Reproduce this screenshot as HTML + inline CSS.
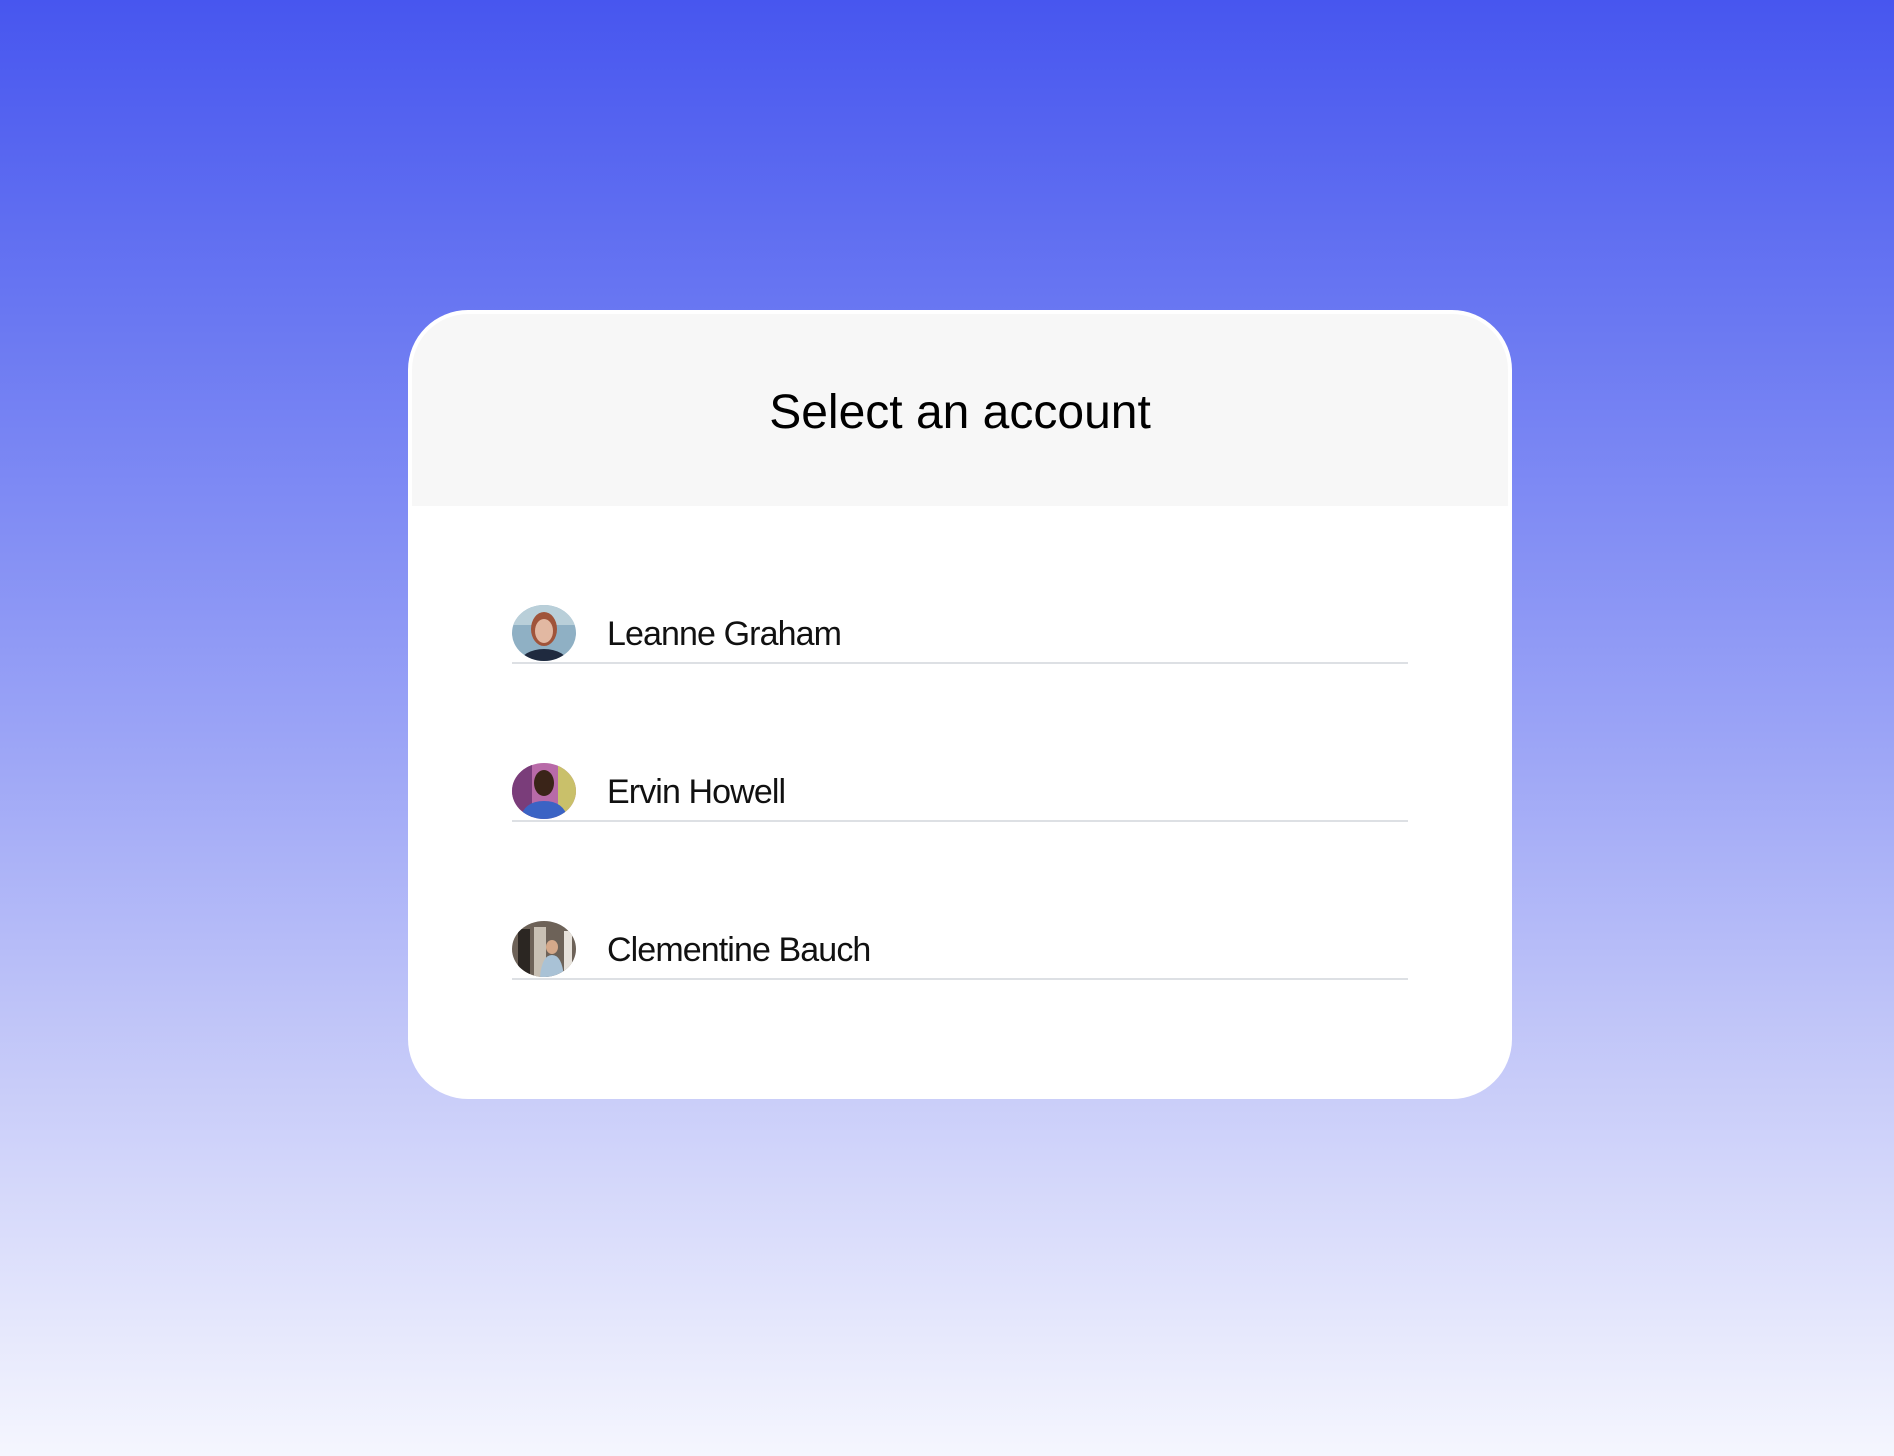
<!DOCTYPE html>
<html><head><meta charset="utf-8"><style>
html,body{margin:0;padding:0;}
body{width:1894px;height:1456px;overflow:hidden;position:relative;
background:linear-gradient(180deg,#4756ef 0%,#6a78f2 22%,#9aa3f6 50%,#c9cdf9 75%,#f5f6fe 100%);
font-family:"Liberation Sans",sans-serif;}
.card{position:absolute;left:408px;top:310px;width:1104px;height:789px;background:#fff;border-radius:60px;overflow:hidden;}
.head{position:absolute;left:4px;top:4px;right:4px;height:192px;background:#f7f7f7;border-radius:56px 56px 0 0;}
.title{position:absolute;left:0;right:0;top:71px;text-align:center;font-size:48px;color:#000;}
.row{position:absolute;left:104px;width:896px;height:57px;border-bottom:2px solid #dde0e4;}
.av{position:absolute;left:0;top:0;width:64px;height:56px;border-radius:50%;overflow:hidden;}
.nm{position:absolute;left:95px;top:10px;font-size:34px;color:#111;letter-spacing:-0.9px;}
</style></head><body>
<div class="card">
 <div class="head"><div class="title">Select an account</div></div>
 <div class="row" style="top:295px">
  <div class="av"><svg width="64" height="56"><rect width="64" height="56" fill="#8fb0c4"/><rect y="0" width="64" height="20" fill="#b9cfd9"/><ellipse cx="32" cy="24" rx="13" ry="17" fill="#a0543a"/><ellipse cx="32" cy="26" rx="9" ry="12" fill="#e2b8a2"/><ellipse cx="32" cy="58" rx="24" ry="14" fill="#1f2a3f"/></svg></div>
  <div class="nm">Leanne Graham</div>
 </div>
 <div class="row" style="top:453px">
  <div class="av"><svg width="64" height="56"><rect width="64" height="56" fill="#b86aa8"/><rect x="0" y="0" width="20" height="56" fill="#7a3d7a"/><rect x="46" y="0" width="18" height="56" fill="#c9c06a"/><ellipse cx="32" cy="20" rx="10" ry="13" fill="#3a2418"/><path d="M8 56 Q12 38 32 38 Q52 38 56 56Z" fill="#3b63c4"/></svg></div>
  <div class="nm">Ervin Howell</div>
 </div>
 <div class="row" style="top:611px">
  <div class="av"><svg width="64" height="56"><rect width="64" height="56" fill="#6d6258"/><rect x="6" y="8" width="12" height="48" fill="#2b2622"/><rect x="22" y="6" width="12" height="50" fill="#c8c0b4"/><ellipse cx="40" cy="26" rx="6" ry="7" fill="#d5a98a"/><path d="M28 56 Q30 34 40 34 Q50 34 52 56Z" fill="#a9c2d6"/><rect x="52" y="10" width="8" height="46" fill="#e6e1da"/></svg></div>
  <div class="nm">Clementine Bauch</div>
 </div>
</div>
</body></html>
